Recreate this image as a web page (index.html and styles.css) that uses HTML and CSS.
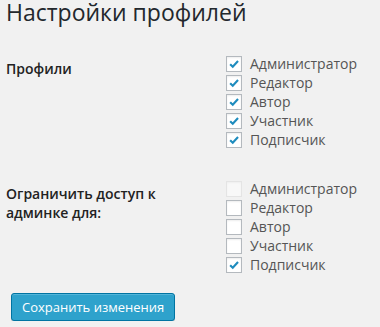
FILE: index.html
```html
<!DOCTYPE html>
<html>
<head>
<meta charset="utf-8">
<title>Настройки профилей</title>
<link rel="stylesheet" href="styles.css">
</head>
<body>

<div class="wrap">
  <h1>Настройки профилей</h1>
  <form class="form-table">
    <div class="fila">
      <div class="fila__titulo">Профили</div>
      <div class="fila__campos">
        <label><span class="caja caja--marcada"><svg viewBox="0 0 16 16"><path d="M3.6 8.2 L6.6 11.2 L12.6 4.6"/></svg></span>Администратор</label>
        <label><span class="caja caja--marcada"><svg viewBox="0 0 16 16"><path d="M3.6 8.2 L6.6 11.2 L12.6 4.6"/></svg></span>Редактор</label>
        <label><span class="caja caja--marcada"><svg viewBox="0 0 16 16"><path d="M3.6 8.2 L6.6 11.2 L12.6 4.6"/></svg></span>Автор</label>
        <label><span class="caja caja--marcada"><svg viewBox="0 0 16 16"><path d="M3.6 8.2 L6.6 11.2 L12.6 4.6"/></svg></span>Участник</label>
        <label><span class="caja caja--marcada"><svg viewBox="0 0 16 16"><path d="M3.6 8.2 L6.6 11.2 L12.6 4.6"/></svg></span>Подписчик</label>
      </div>
    </div>
    <div class="fila">
      <div class="fila__titulo">Ограничить доступ к админке для:</div>
      <div class="fila__campos">
        <label><span class="caja caja--desactivada"></span>Администратор</label>
        <label><span class="caja"></span>Редактор</label>
        <label><span class="caja"></span>Автор</label>
        <label><span class="caja"></span>Участник</label>
        <label><span class="caja caja--marcada"><svg viewBox="0 0 16 16"><path d="M3.6 8.2 L6.6 11.2 L12.6 4.6"/></svg></span>Подписчик</label>
      </div>
    </div>
    <p class="submit"><button type="button" class="boton">Сохранить изменения</button></p>
  </form>
</div>

</body>
</html>
```

FILE: styles.css
```css
html {
  font-family: "Open Sans", sans-serif;
  font-size: 14px;
}

body {
  margin: 0;
  background-color: #f1f1f1;
  color: #444;
}

.wrap {
  padding: 0 6px;
}

h1 {
  margin: 0;
  font-size: 23px;
  font-weight: 400;
  line-height: 24px;
  color: #23282d;
}

.form-table {
  margin-top: 15px;
}

.fila {
  display: grid;
  grid-template-columns: 210px 1fr;
}

.fila__titulo {
  width: 200px;
  padding: 20px 10px 20px 0;
  font-weight: 600;
  line-height: 19px;
  color: #222;
}

.fila__campos {
  padding: 15px 10px;
  display: flex;
  flex-direction: column;
}

.fila__campos label {
  display: flex;
  align-items: center;
  gap: 8px;
  line-height: 19px;
  color: #555;
}

.caja {
  box-sizing: border-box;
  width: 16px;
  height: 16px;
  border: 1px solid #b4b9be;
  background-color: #fff;
  box-shadow: inset 0 1px 2px rgba(0, 0, 0, 0.07);
  display: flex;
}

.caja svg {
  width: 14px;
  height: 14px;
  fill: none;
  stroke: #1e8cbe;
  stroke-width: 2.4;
}

.caja--desactivada {
  border-color: rgba(222, 222, 222, 0.75);
  background-color: rgba(255, 255, 255, 0.5);
  box-shadow: inset 0 1px 2px rgba(0, 0, 0, 0.04);
}

.submit {
  margin: 4px 0 0 5px;
}

.boton {
  box-sizing: border-box;
  height: 28px;
  padding: 0 10px 1px;
  font-family: inherit;
  font-size: 13px;
  line-height: 26px;
  color: #fff;
  background-color: #2ea2cc;
  border: 1px solid #0074a2;
  border-radius: 3px;
  box-shadow: inset 0 1px 0 rgba(120, 200, 230, 0.5), 0 1px 0 rgba(0, 0, 0, 0.15);
}
```
